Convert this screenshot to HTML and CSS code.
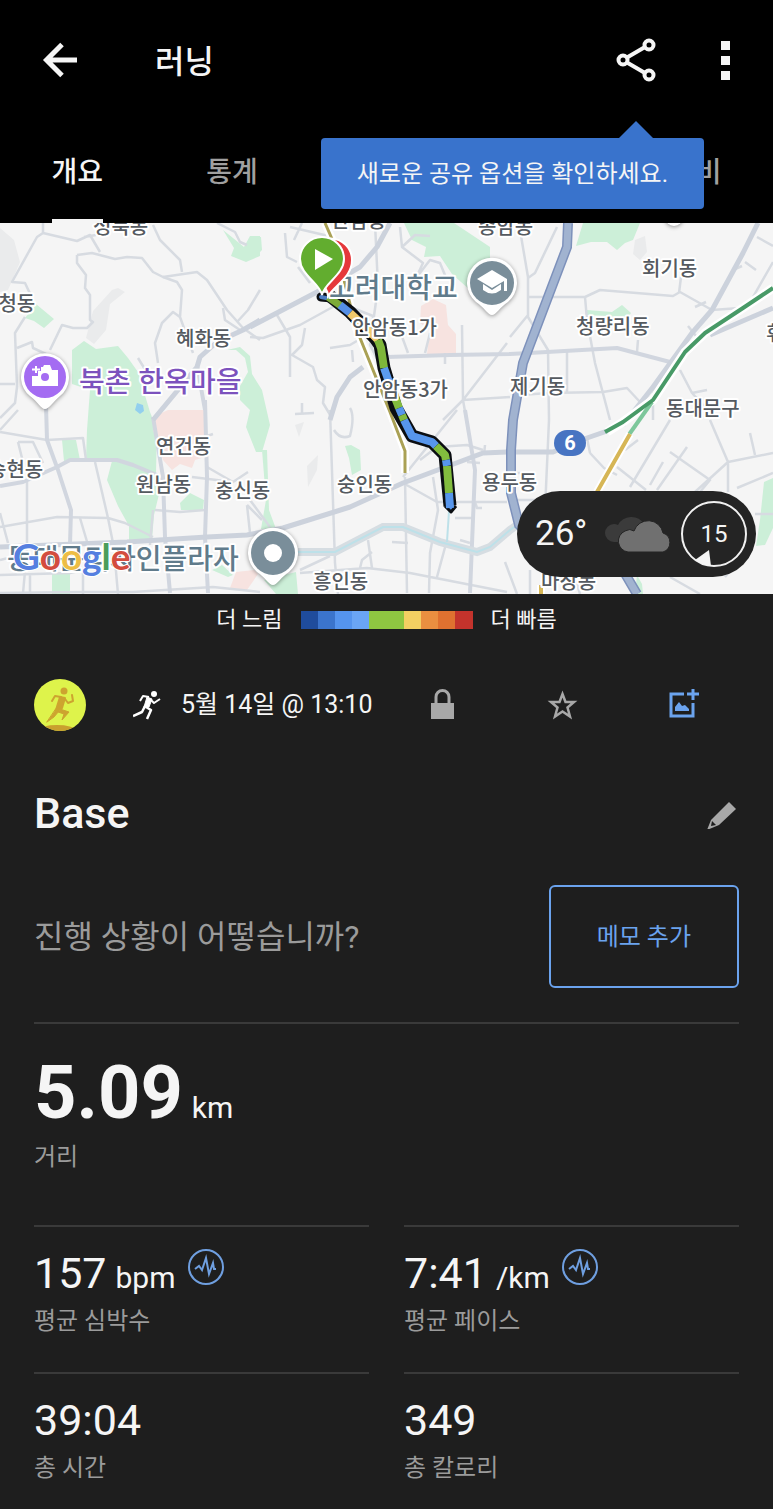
FILE: index.html
```html
<!DOCTYPE html>
<html lang="ko">
<head>
  <meta charset="utf-8">
  <meta name="viewport" content="width=device-width, initial-scale=1">
  <title>러닝</title>
  <link rel="stylesheet" href="styles.css">
</head>
<body>

<header class="top">
  <div class="toolbar">
    <button class="icon-button" type="button" aria-label="뒤로">
      <svg width="48" height="48" viewBox="0 0 48 48" fill="none" stroke="#f5f5f5" stroke-width="5">
        <path d="M41 24H11M26 8.500L10.500 24L26 39.500"/>
      </svg>
    </button>
    <h1 class="toolbar-title">러닝</h1>
    <button class="icon-button share" type="button" aria-label="공유">
      <svg width="48" height="48" viewBox="0 0 48 48" fill="none" stroke="#f5f5f5" stroke-width="4">
        <path d="M15 21.500L33 11M15 26.500L33 37"/>
        <circle cx="11" cy="24" r="4.500"/>
        <circle cx="37" cy="9" r="4.500"/>
        <circle cx="37" cy="39" r="4.500"/>
      </svg>
    </button>
    <button class="icon-button" type="button" aria-label="더보기">
      <svg width="48" height="48" viewBox="0 0 48 48" fill="#f5f5f5">
        <path d="M20 5h9v9h-9zM20 20h9v9h-9zM20 35h9v9h-9z"/>
      </svg>
    </button>
  </div>

  <nav class="tabs">
    <a class="tab active" href="#overview"><span>개요</span></a>
    <a class="tab" href="#stats"><span>통계</span></a>
    <a class="tab last" href="#gear"><span>장비</span></a>
  </nav>

  <div class="tooltip" role="tooltip">새로운 공유 옵션을 확인하세요.</div>
</header>

<section class="map">
  <svg class="map-canvas" viewBox="0 223 773 371" preserveAspectRatio="xMidYMid slice">
    <rect x="0" y="223" width="773" height="371" fill="#f5f5f5"/>

    <!-- hills -->
    <g fill="#eaebec">
      <path d="M0 228L14 240L20 262L8 290L0 292zM93 311L112 290L118 288L125 292L110 304L106 330L94 344L86 338zM635 240L645 236L647 252L640 260L633 254z"/>
      <path d="M307 466L318 455L317 470L308 487zM295 425L304 422L299 437z"/>
    </g>

    <!-- parks -->
    <g fill="#ccefd8">
      <path d="M72 350L84 341L96 349L118 346L128 358L138 372L150 412L157 430L156 473L160 490L154 515L152 539L129 540L129 526L118 506L107 480L112 461L86 459L87 430L90 390L72 384z"/>
      <path d="M223 230L233 238L244 247L250 236L260 236V256L246 262L231 256L234 248zM250 236L261 237L262 250L256 256L250 252z"/>
      <path d="M25 318L36 304L54 319L44 328L34 321z"/>
      <path d="M404 223H454L490 247V272L480 292L470 290L452 274L440 256L424 257L426 247L412 240z"/>
      <path d="M583 223H640L633 240L625 243L617 250L607 242L591 242L576 246z"/>
      <path d="M587 310L612 312L622 305L631 313L628 317L587 315z"/>
      <path d="M227 350L240 347L250 356L252 374L262 390L270 425L262 452H256L246 427L250 410L240 400V386L248 372L245 358L236 350z"/>
      <path d="M262 450H267L269 510L276 529H261L266 500zM345 446L351 445L360 450L361 470L352 475L349 458z"/>
      <path d="M62 440L76 440L80 460L64 461zM180 503L190 493L204 500L203 510L181 510z"/>
      <path d="M52 573H70V594H52zM264 580L296 572L298 594H276zM212 570L222 565L233 575L228 577z"/>
      <path d="M764 482L773 478V528L765 545L756 546L760 520zM637 575L642 584L643 594H635z"/>
    </g>

    <!-- hospitals -->
    <g fill="#f7e3e0">
      <path d="M157 415L168 410H205V457L195 460L192 468L180 464L172 470L163 460L153 430z"/>
      <path d="M421 306L433 299L446 305L448 325L456 334V354H427L430 330L420 323z"/>
      <path d="M236 572L254 570L258 574L247 590L230 588z"/>
    </g>
    <path d="M137 403l6 2 1 6-4 3-5-4z" fill="#92cfee"/>

    <!-- side streets -->
    <g fill="none" stroke="#d7dbe1" stroke-width="2.500" stroke-linejoin="round">
      <path d="M43 223L43 233L37 237L12 282L25 283L33 300M43 233L77 241L90 235L100 252M84 237L96 235"/>
      <path d="M77 255L92 253L115 259L127 257L142 258L153 272L163 277L177 282L182 290L180 317L193 353"/>
      <path d="M77 255V263L86 275L85 288L90 295V320L93 322L87 328H73L62 325L50 350"/>
      <path d="M153 225L160 240L180 260L182 272M163 277L197 272L207 280L227 310L243 328L260 340"/>
      <path d="M260 290L248 310L237 322M223 308L225 320L240 330M180 317L173 312L162 323L155 343L158 363"/>
      <path d="M217 223L235 232L240 242L247 245M138 358L146 371M25 317L15 333L17 387L15 403L0 418M17 348L32 342L33 348L46 354M0 384H15"/>
      <path d="M0 432L47 440L83 438L86 460M18 442L33 442L43 463M18 442L22 458M18 410L0 430"/>
      <path d="M95 462L108 518L113 543M27 482V550L23 593M0 527L57 517L108 518L125 523L153 537M0 513L8 543"/>
      <path d="M155 510L180 512L205 510M207 467L233 482L248 472M192 477L233 482M247 505L250 533M247 505L262 520"/>
      <path d="M163 477L157 483M0 575L70 573L83 570V594M30 575V594M115 560L118 594M0 560L20 555M80 518L88 545"/>
      <path d="M0 593L83 592L133 592L213 587L260 592M213 434L207 436M153 510L150 545"/>
      <path d="M250 337L263 338L300 325L340 303M277 315L290 337V377M305 328L302 345L292 355L313 367L317 380L325 387L323 403L332 418"/>
      <path d="M298 267L310 283M285 233L287 257L297 262M290 227L333 237M302 223L294 240M295 414L314 413M302 403V413"/>
      <path d="M375 223L378 287L370 345L380 365M400 227L402 247L423 263L416 278L430 260L440 263L447 280M402 247L415 235L430 236"/>
      <path d="M340 303L373 316L372 350M330 348L350 345L372 332M352 350L353 362M397 323L408 353M430 333L425 353"/>
      <path d="M462 325L463 400L470 440M507 343L463 400L443 420M463 400L510 397M445 353V364M387 357L380 370L395 380"/>
      <path d="M330 410L335 563L338 594M334 430Q340 440 350 436Q355 416 350 408M405 477L407 593M457 410L403 477M403 483L437 502L507 502M420 460L437 447L467 445L483 450"/>
      <path d="M300 573L367 568L410 573L507 592M433 477L438 510L430 553L429 593M447 540L437 577M368 540L372 568M360 568L362 560L372 552"/>
      <path d="M300 570L330 556M392 542L408 543M455 518H475M460 540L470 543M475 502L477 508L482 508M467 462L480 463M485 445L484 455M250 500L270 527"/>
      <path d="M520 230L528 277V317L548 350L549 420L545 510M557 227L535 273L528 278M510 337L528 315"/>
      <path d="M528 297H585L600 290L673 296L680 292L712 310L740 308M681 277L679 293M585 297L587 320L595 363L610 420M567 352V393"/>
      <path d="M520 395L549 393L603 392L627 388L640 402M757 237L773 246M773 262L753 297M745 262L756 270M695 307L706 302M638 340L637 352"/>
      <path d="M680 370L692 393L707 390M670 362L653 393V420M692 393L708 410M733 270L742 266M688 326L696 336"/>
      <path d="M670 420L630 487M710 420L728 462L773 453M728 462L695 492M728 462V492M670 452L710 480L700 492M687 447L657 490M663 462L650 485"/>
      <path d="M617 467L646 490M590 453L604 468L617 475M773 473L737 488M750 433L755 455M587 438L590 453M638 440L625 450M515 500H535M517 473H520"/>
      <path d="M575 577L580 594M670 577L700 594M530 570V594M545 575L540 594M735 565L725 577M773 514H755M505 562L517 594"/>
    </g>

    <!-- main streets -->
    <g fill="none" stroke="#d1d6df" stroke-width="4" stroke-linejoin="round">
      <path d="M46 405L47 440L58 470L71 510L70 545M0 486L23 482L57 467L70 460L117 460L133 465L157 475"/>
      <path d="M153 417L163 477L165 537L170 593M205 400L207 477L205 537L208 593M197 365L205 410"/>
      <path d="M387 357L450 355L510 354L547 352L617 348L670 362M465 410L475 470L470 593"/>
    </g>
    <g fill="none" stroke="#ccd2dc" stroke-width="5" stroke-linejoin="round">
      <path d="M260 320L243 330L217 342L200 357L197 367L153 420M250 327L317 292L360 267L377 247L390 223"/>
      <path d="M0 547L127 542L207 537L247 535L283 528L350 507L403 483L483 453L507 452L553 452L587 438L610 430"/>
      <path d="M758 223L743 253L712 310L692 333L653 387L623 425M773 308L710 335M330 420L337 397L350 377L363 367"/>
    </g>

    <!-- stream -->
    <path d="M298 552H335L383 527H403L440 542L477 552L490 547L510 530L520 523" fill="none" stroke="#d6dde2" stroke-width="8"/>
    <path d="M298 552H335L383 527H403L440 542L477 552L490 547L510 530L520 523" fill="none" stroke="#bde1e9" stroke-width="2"/>
    <path d="M449 511L447 542" stroke="#bde1e9" stroke-width="2"/>

    <!-- expressway -->
    <path d="M568 223L567 247L548 297L523 363L513 420L511 450L511 493L519 525L545 550L617 560L627 577L637 594" fill="none" stroke="#7d91bb" stroke-width="10"/>
    <path d="M568 223L567 247L548 297L523 363L513 420L511 450L511 493L519 525L545 550L617 560L627 577L637 594" fill="none" stroke="#a1b3d0" stroke-width="7"/>

    <!-- rail lines -->
    <g fill="none" stroke-linejoin="round">
      <path d="M773 288L743 308L705 333L685 352L653 400L623 422L607 432" stroke="#fff" stroke-width="9"/>
      <path d="M652 402L628 436" stroke="#7dc79b" stroke-width="4"/>
      <path d="M773 288L743 308L705 333L685 352L653 400L623 422L605 432" stroke="#489a67" stroke-width="4"/>
      <path d="M630 434L597 492M541 585V594" stroke="#fff" stroke-width="8"/>
      <path d="M630 434L597 492M541 585V594" stroke="#d6b656" stroke-width="4"/>
      <path d="M325 223L336 248L356 328L390 412L405 451V473" stroke="#fff" stroke-width="8"/>
      <path d="M325 223L336 248L356 328L390 412L405 451V473" stroke="#aaa155" stroke-width="3"/>
    </g>

    <!-- route, coloured by pace -->
    <g fill="none" stroke-linejoin="round">
      <path d="M321 297L332 298" stroke="#0b0e12" stroke-width="9" stroke-linecap="round"/>
      <path d="M330 296L350 312L375 338L380 345L384 368L396 408L412 436L432 442L445 455L450 506" stroke="#0b0e12" stroke-width="13"/>
      <path d="M321 297L326 298" stroke="#4f7fc4" stroke-width="4" stroke-linecap="round"/>
      <path d="M328 297L341 306" stroke="#7caa39" stroke-width="7"/>
      <path d="M340 305L350 313" stroke="#558fe6" stroke-width="8"/>
      <path d="M350 313L366 328L378 340" stroke="#f2c96b" stroke-width="8"/>
      <path d="M378 340L381 348L384 368" stroke="#7eb63a" stroke-width="8"/>
      <path d="M384 368L389 382" stroke="#5b9bee" stroke-width="8"/>
      <path d="M389 382L399 408" stroke="#82bc3e" stroke-width="8"/>
      <path d="M399 408L402 415M404 420L412 436L432 442L436 446" stroke="#5796ec" stroke-width="8"/>
      <path d="M402 415L404 420M436 446L445 455L446 460" stroke="#82bc3e" stroke-width="8"/>
      <path d="M446 460L447 466" stroke="#5796ec" stroke-width="8"/>
      <path d="M447 466L449 493" stroke="#82bc3e" stroke-width="8"/>
      <path d="M445 506L451 512L456 506" fill="#5796ec" stroke="#0b0e12" stroke-width="3"/>
      <path d="M449 493L450 508" stroke="#5796ec" stroke-width="8"/>
    </g>

    <!-- place names -->
    <g class="place">
      <text x="93" y="234">성북동</text>
      <text x="331" y="228">안암동</text>
      <text x="478" y="234">종암동</text>
      <text x="-20" y="311">삼청동</text>
      <text x="176" y="346">혜화동</text>
      <text x="352" y="335">안암동1가</text>
      <text x="363" y="397">안암동3가</text>
      <text x="642" y="276">회기동</text>
      <text x="576" y="334">청량리동</text>
      <text x="510" y="394">제기동</text>
      <text x="666" y="416">동대문구</text>
      <text x="766" y="341">휘경동</text>
      <text x="156" y="454">연건동</text>
      <text x="-12" y="477">송현동</text>
      <text x="136" y="492">원남동</text>
      <text x="215" y="498">충신동</text>
      <text x="337" y="492">숭인동</text>
      <text x="482" y="490">용두동</text>
      <text x="313" y="589">흥인동</text>
      <text x="541" y="589">마장동</text>
    </g>
    <text class="landmark" x="329" y="298">고려대학교</text>
    <text class="landmark" x="7" y="569">동대문디자인플라자</text>
    <text class="landmark village" x="79" y="392">북촌 한옥마을</text>

    <!-- landmark pins -->
    <g class="pin">
      <path d="M45 409C41 409 38 402 30 396A24 24 0 1 1 60 396C53 402 49 409 45 409z" fill="#fff"/>
      <circle cx="45" cy="377" r="21" fill="#a46cf2"/>
      <path d="M41 371V367H43L44 365H50L52 370H58V386H32V376H38V371z" fill="#fff"/>
      <circle cx="45" cy="377" r="4" fill="#a46cf2"/>
      <path d="M36 366V373M32 369.500H40" stroke="#fff" stroke-width="2"/>
    </g>
    <g class="pin">
      <path d="M492 315C488 315 484 307 476 302A25 25 0 1 1 508 302C500 307 496 315 492 315z" fill="#fff"/>
      <circle cx="492" cy="283" r="22" fill="#7a8e9a"/>
      <path d="M477 279L492 270L507 279V291H504V281L492 288z" fill="#fff"/>
      <path d="M483 284L492 290L501 284V290Q492 297 483 290z" fill="#fff"/>
    </g>
    <g class="pin">
      <path d="M273 585C269 585 265 577 257 572A25 25 0 1 1 289 572C281 577 277 585 273 585z" fill="#fff"/>
      <circle cx="273" cy="553" r="22" fill="#7a8e9a"/>
      <circle cx="273" cy="553" r="9" fill="#fff"/>
    </g>
    <circle class="pin" cx="674" cy="217" r="9" fill="#fff"/>

    <!-- finish and start markers -->
    <path d="M328 296C328 284 309 277 309 260A21 21 0 0 1 352 260C352 277 336 284 328 296z" fill="#e5383b" stroke="#fff" stroke-width="2"/>
    <path d="M322 295C320 283 300 275 300 259A22 22 0 0 1 344 259C344 275 324 283 322 295z" fill="#62ad2f" stroke="#fff" stroke-width="2"/>
    <path d="M315 249L333 259L315 270z" fill="#fff"/>

    <rect x="554" y="430" width="32" height="26" rx="13" fill="#4774c2"/>
    <text class="route-number" x="570" y="450">6</text>

    <text class="map-logo" x="13" y="570"><tspan fill="#557fe0">G</tspan><tspan fill="#d34c3e">o</tspan><tspan fill="#edbd45">o</tspan><tspan fill="#557fe0">g</tspan><tspan fill="#4b9d5b">l</tspan><tspan fill="#d34c3e">e</tspan></text>
  </svg>

  <div class="weather">
    <span class="temperature">26°</span>
    <svg width="68" height="40" viewBox="0 0 68 40">
      <path d="M9 28A9 9 0 0 1 9 10Q11 10 13 11A15 15 0 0 1 39 10V28z" fill="#3b3b3b"/>
      <path d="M23 38A11 11 0 0 1 20 17Q25 14 29 17A15 15 0 0 1 58 19A10 10 0 0 1 58 38z" fill="#707070" stroke="#242424" stroke-width="1"/>
    </svg>
    <span class="wind">
      <svg class="wind-ring" width="68" height="68" viewBox="0 0 68 68">
        <circle cx="34" cy="34" r="32" fill="none" stroke="#f0f0f0" stroke-width="2"/>
        <path d="M15 60L29 50L31 66Q22 65 15 60z" fill="#f5f5f5"/>
      </svg>
      15
    </span>
  </div>
</section>

<div class="legend">
  <span>더 느림</span>
  <div class="legend-bar">
    <i class="pace-1"></i>
    <i class="pace-2"></i>
    <i class="pace-3"></i>
    <i class="pace-4"></i>
    <i class="pace-5"></i>
    <i class="pace-5"></i>
    <i class="pace-6"></i>
    <i class="pace-7"></i>
    <i class="pace-8"></i>
    <i class="pace-9"></i>
  </div>
  <span>더 빠름</span>
</div>

<div class="activity">
  <svg class="avatar" width="52" height="52" viewBox="0 0 52 52">
    <clipPath id="avatar-clip"><circle cx="26" cy="26" r="26"/></clipPath>
    <g clip-path="url(#avatar-clip)">
      <rect width="52" height="52" fill="#def34b"/>
      <ellipse cx="23" cy="51" rx="18" ry="5" fill="#c9a02e"/>
      <g fill="#cda42f" stroke="#cda42f" stroke-linejoin="round" stroke-linecap="round">
        <path d="M26 18L31 19L28 29L22 31z" stroke-width="2"/>
        <path d="M27 18L21 17L18 22M31 20L34 24L39 22L38 16" fill="none" stroke-width="2"/>
        <path d="M22 30L25 32L20 38L13 43z" stroke-width="1"/>
        <path d="M26 30L35 33L28 41L30 35L24 33z" stroke-width="1"/>
      </g>
      <circle cx="30" cy="12" r="3.500" fill="#cda42f"/>
    </g>
  </svg>
  <svg class="runner" width="28" height="30" viewBox="0 0 28 30" fill="#fff" stroke="#fff" stroke-linejoin="round">
    <circle cx="21" cy="4" r="3" stroke="none"/>
    <path d="M14 7L19 9L16 17L11 17z" stroke-width="1"/>
    <path d="M16 7L10 6L7 11M18 10L21 13L27 9" fill="none" stroke-width="2"/>
    <path d="M12 16L9 22L0 26M13 17L18 20L14 29" fill="none" stroke-width="2.500"/>
  </svg>
  <time class="activity-date" datetime="05-14T13:10">5월 14일 @ 13:10</time>
  <button class="action" type="button" aria-label="공개 설정">
    <svg width="32" height="32" viewBox="0 0 32 32">
      <path d="M4 14H27V30H4z" fill="#a8a8a8"/>
      <path d="M9 15V8A6 6 0 0 1 22 8V15" fill="none" stroke="#a8a8a8" stroke-width="3"/>
    </svg>
  </button>
  <button class="action" type="button" aria-label="즐겨찾기">
    <svg width="32" height="32" viewBox="0 0 32 32" fill="none" stroke="#a8a8a8" stroke-width="2.500">
      <path d="M15.500 5L18.500 13H27L20.500 18.500L23 27.500L15.500 22.500L8 27.500L10.500 18.500L4 13H12.500z"/>
    </svg>
  </button>
  <button class="action" type="button" aria-label="사진 추가">
    <svg width="32" height="32" viewBox="0 0 32 32">
      <path d="M17 5H4V27H26V14M26 0V11M20 5H32" fill="none" stroke="#6ba3ee" stroke-width="3"/>
      <path d="M8 22V18L12 13L15 17L18 16L22 20V22z" fill="#6ba3ee"/>
    </svg>
  </button>
</div>

<main class="content" id="overview">
  <div class="title-row">
    <h2 class="title">Base</h2>
    <button class="icon-button" type="button" aria-label="제목 편집">
      <svg width="32" height="32" viewBox="0 0 32 32">
        <path d="M22 5L29 12L12 28L0 33L4 23z" fill="#a8a8a8"/>
        <path d="M4 29L5 24L9 28z" fill="#1e1e1e"/>
      </svg>
    </button>
  </div>

  <div class="note">
    <p class="note-text">진행 상황이 어떻습니까?</p>
    <button class="note-button" type="button">메모 추가</button>
  </div>

  <section class="distance">
    <div class="value"><strong class="number-large">5.09</strong><span class="unit">km</span></div>
    <div class="label">거리</div>
  </section>

  <section class="metrics">
    <div class="metric">
      <div class="value"><span class="number">157</span><span class="unit">bpm</span>
        <svg class="chart-icon" width="36" height="36" viewBox="0 0 36 36" fill="none" stroke="#6f9fe0" stroke-width="2">
          <circle cx="18" cy="18" r="17"/>
          <path d="M7 20L11 17L14 21L18 9L21 25L25 14L26 20L28 20"/>
        </svg>
      </div>
      <div class="label">평균 심박수</div>
    </div>
    <div class="metric">
      <div class="value"><span class="number">7:41</span><span class="unit">/km</span>
        <svg class="chart-icon" width="36" height="36" viewBox="0 0 36 36" fill="none" stroke="#6f9fe0" stroke-width="2">
          <circle cx="18" cy="18" r="17"/>
          <path d="M7 20L11 17L14 21L18 9L21 25L25 14L26 20L28 20"/>
        </svg>
      </div>
      <div class="label">평균 페이스</div>
    </div>
    <div class="metric">
      <div class="value"><span class="number">39:04</span></div>
      <div class="label">총 시간</div>
    </div>
    <div class="metric">
      <div class="value"><span class="number">349</span></div>
      <div class="label">총 칼로리</div>
    </div>
  </section>
</main>

</body>
</html>
```
FILE: styles.css
```css
* {
  box-sizing: border-box;
  margin: 0;
  padding: 0;
}

:root {
  --background: #1e1e1e;
  --text: #f5f5f5;
  --muted: #9b9b9b;
  --line: #3a3a3a;
  --blue: #6ba3ee;
}

body {
  background: var(--background);
  color: var(--text);
  font-family: Roboto, "Noto Sans CJK KR", sans-serif;
  font-size: 24px;
  line-height: 32px;
}

button {
  background: none;
  border: none;
  color: inherit;
  font: inherit;
  cursor: pointer;
}

svg {
  display: block;
}

/* header */

.top {
  position: relative;
  z-index: 1;
  background: #000;
}

.toolbar {
  display: flex;
  align-items: center;
  height: 120px;
  padding: 0 24px 0 36px;
}

.toolbar-title {
  flex: 1;
  margin-left: 71px;
  padding-top: 4px;
  font-size: 32px;
  font-weight: 500;
}

.share {
  margin-right: 41px;
}

.tabs {
  display: grid;
  grid-template-columns: repeat(5, 1fr);
  height: 103px;
}

.tab {
  display: flex;
  justify-content: center;
  color: #a0a0a0;
  font-size: 28px;
  font-weight: 500;
  text-decoration: none;
}

.tab.last {
  grid-column: 5;
}

.tab span {
  display: flex;
  align-items: center;
  padding-top: 6px;
  border-bottom: 4px solid transparent;
}

.tab.active {
  color: var(--text);
}

.tab.active span {
  border-bottom-color: var(--text);
}

.tooltip {
  position: absolute;
  top: 138px;
  right: 69px;
  padding: 20px 36px 19px;
  border-radius: 4px;
  background: #3973cc;
  white-space: nowrap;
}

.tooltip::before {
  content: "";
  position: absolute;
  right: 51px;
  bottom: 100%;
  border: 17px solid transparent;
  border-top: none;
  border-bottom-color: #3973cc;
}

/* map */

.map {
  position: relative;
}

.map-canvas {
  width: 100%;
  height: 371px;
}

.place,
.landmark {
  font-family: "Noto Sans CJK KR", sans-serif;
  font-weight: 500;
  stroke: #fff;
  stroke-width: 4px;
  stroke-linejoin: round;
  paint-order: stroke;
}

.place {
  fill: #555a60;
  font-size: 20px;
}

.landmark {
  fill: #607b8b;
  font-size: 28px;
}

.village {
  fill: #7c52bd;
}

.pin {
  filter: drop-shadow(0 1px 2px rgba(0, 0, 0, 0.4));
}

.route-number {
  fill: #fff;
  font-size: 20px;
  font-weight: 700;
  text-anchor: middle;
}

.map-logo {
  font-family: Lato, sans-serif;
  font-size: 37px;
  font-weight: 700;
  stroke: #fff;
  stroke-width: 2px;
  paint-order: stroke;
}

.weather {
  position: absolute;
  right: 17px;
  bottom: 17px;
  display: flex;
  align-items: center;
  height: 86px;
  padding: 0 8px 0 18px;
  border-radius: 43px;
  background: #242424;
}

.temperature {
  width: 70px;
  font-size: 35px;
}

.wind {
  position: relative;
  width: 68px;
  margin-left: 7px;
  line-height: 68px;
  text-align: center;
}

.wind-ring {
  position: absolute;
  inset: 0;
}

/* pace legend */

.legend {
  display: flex;
  align-items: center;
  justify-content: center;
  gap: 18px;
  height: 51px;
  font-size: 22px;
}

.legend-bar {
  display: flex;
  width: 172px;
  height: 18px;
}

.legend-bar i {
  flex: 1;
}

.pace-1 { background: #1f4c9c; }
.pace-2 { background: #3b74cc; }
.pace-3 { background: #5594ee; }
.pace-4 { background: #6aa5f5; }
.pace-5 { background: #8fc641; }
.pace-6 { background: #f3cf62; }
.pace-7 { background: #ea8f40; }
.pace-8 { background: #df7130; }
.pace-9 { background: #c3332c; }

/* activity row */

.activity {
  display: flex;
  align-items: center;
  height: 120px;
  padding: 0 30px 0 34px;
}

.runner {
  margin: 0 20px 0 47px;
}

.activity-date {
  flex: 1;
  font-size: 25px;
  white-space: nowrap;
}

.action {
  display: flex;
  justify-content: center;
  width: 120px;
  padding: 16px 0;
}

/* content */

.content {
  padding: 0 34px;
}

.title-row {
  display: flex;
  align-items: center;
  justify-content: space-between;
  height: 96px;
}

.title {
  font-size: 43px;
  font-weight: 500;
}

.note {
  display: flex;
  align-items: center;
  justify-content: space-between;
  padding: 24px 0 34px;
  border-bottom: 2px solid var(--line);
}

.note-text {
  color: var(--muted);
  font-size: 32px;
}

.note-button {
  height: 103px;
  padding: 0 46px;
  border: 2px solid var(--blue);
  border-radius: 6px;
  color: var(--blue);
}

.value {
  display: flex;
  align-items: baseline;
}

.unit {
  margin-left: 9px;
  font-size: 30px;
}

.label {
  color: var(--muted);
}

.distance {
  padding: 29px 0 52px;
}

.number-large {
  font-size: 74px;
  font-weight: 700;
  line-height: 80px;
}

.distance .label {
  margin-top: 8px;
}

.metrics {
  display: grid;
  grid-template-columns: 1fr 1fr;
  column-gap: 35px;
}

.metric {
  padding: 18px 0 35px;
  border-top: 2px solid var(--line);
}

.number {
  font-size: 43px;
  line-height: 56px;
}

.metric .label {
  margin-top: 4px;
}

.chart-icon {
  align-self: flex-start;
  margin: 4px 0 0 12px;
}
```
